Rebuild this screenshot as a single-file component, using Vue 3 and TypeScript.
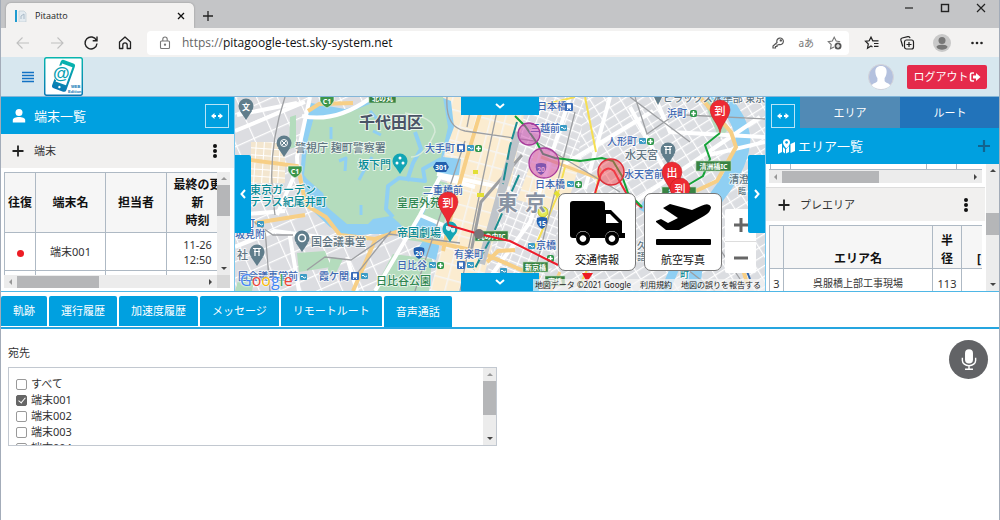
<script setup lang="ts">
import { ref } from 'vue'

interface MapLabel { t: string; x: number; y: number; s: number; k: string }
interface Pin { x: number; y: number; t: string }
interface Recipient { id: string; name: string; on: boolean }

const tabs = ['軌跡', '運行履歴', '加速度履歴', 'メッセージ', 'リモートルート', '音声通話']
const activeTab = ref('音声通話')
const areaTab = ref('エリア')

const recipients = ref<Recipient[]>([
  { id: 'all', name: 'すべて', on: false },
  { id: 't1', name: '端末001', on: true },
  { id: 't2', name: '端末002', on: false },
  { id: 't3', name: '端末003', on: false },
  { id: 't4', name: '端末004', on: false },
])

const labels: MapLabel[] = [
  { t: '千代田区', x: 124, y: 25, s: 16, k: 'ward' },
  { t: '警視庁 麹町警察署', x: 60, y: 50, s: 11, k: 'poi' },
  { t: '坂下門', x: 123, y: 67, s: 11, k: 'teal' },
  { t: '東京ガーデン', x: 15, y: 92, s: 11, k: 'teal' },
  { t: 'テラス紀尾井町', x: 15, y: 104, s: 11, k: 'teal' },
  { t: '国会議事堂', x: 76, y: 144, s: 11, k: 'poi' },
  { t: '社', x: 2, y: 157, s: 11, k: 'poi' },
  { t: '町', x: 10, y: 126, s: 10, k: 'rail' },
  { t: '坂見附', x: 0, y: 137, s: 10, k: 'rail' },
  { t: '国会議事堂前', x: 3, y: 179, s: 10, k: 'rail' },
  { t: '霞ケ関', x: 84, y: 179, s: 10, k: 'rail' },
  { t: '日比谷公園', x: 141, y: 183, s: 11, k: 'park' },
  { t: '日比谷', x: 162, y: 168, s: 10, k: 'rail' },
  { t: '皇居外苑', x: 162, y: 105, s: 11, k: 'park' },
  { t: '帝国劇場', x: 162, y: 135, s: 11, k: 'teal' },
  { t: '二重橋前', x: 188, y: 93, s: 10, k: 'rail' },
  { t: '大手町', x: 190, y: 51, s: 10, k: 'rail' },
  { t: '有楽町', x: 219, y: 157, s: 10, k: 'rail' },
  { t: '東', x: 262, y: 105, s: 21, k: 'city' },
  { t: '京', x: 290, y: 105, s: 21, k: 'city' },
  { t: '日本橋', x: 302, y: 9, s: 10, k: 'rail' },
  { t: '三越前', x: 295, y: 31, s: 10, k: 'rail' },
  { t: '日本橋', x: 300, y: 87, s: 10, k: 'rail' },
  { t: '京橋', x: 301, y: 148, s: 10, k: 'rail' },
  { t: '人形町', x: 372, y: 44, s: 10, k: 'rail' },
  { t: '浜町', x: 432, y: 16, s: 10, k: 'rail' },
  { t: '水天宮', x: 390, y: 57, s: 11, k: 'poi' },
  { t: '水天宮前', x: 389, y: 77, s: 10, k: 'rail' },
  { t: '清澄', x: 494, y: 82, s: 10, k: 'poi' },
  { t: '臨', x: 503, y: 93, s: 8, k: 'poi' },
  { t: 'サピラックス水準部 東京', x: 418, y: 1, s: 10, k: 'poi' },
  { t: '久', x: 402, y: 148, s: 9, k: 'poi' },
  { t: '語', x: 402, y: 159, s: 9, k: 'poi' },
  { t: '町', x: 445, y: 177, s: 9, k: 'teal' },
]

const metro: number[][] = [
  [22, 124], [65, 177], [126, 176], [194, 165], [232, 48], [232, 165], [325, 28],
  [332, 84], [293, 146], [404, 41], [265, 171],
]
const exits: number[][] = [[240, 48], [202, 165], [340, 84], [412, 41], [455, 13], [312, 158]]
const trains: number[][] = [[116, 175], [222, 47], [222, 164], [330, 6]]
const finishPins: Pin[] = [
  { x: 213, y: 106, t: '到' }, { x: 485, y: 14, t: '到' }, { x: 437, y: 76, t: '出' }, { x: 445, y: 92, t: '到' },
]
const greyPins: number[][] = [[11, 9], [49, 46], [67, 141], [22, 155], [433, 53]]
const routeNumbers = [
  { x: 206, y: 70, t: '301' }, { x: 306, y: 72, t: '20' }, { x: 307, y: 126, t: '15' }, { x: 184, y: 156, t: '20' },
]
const signs = [
  { x: 134, y: -4, w: 27, t: '北の丸' }, { x: 240, y: 134, w: 33, t: '丸の内IC' },
  { x: 288, y: 165, w: 25, t: '新京橋' }, { x: 310, y: 179, w: 20, t: '京橋' },
  { x: 461, y: 64, w: 35, t: '清洲橋IC' }, { x: 427, y: 90, w: 34, t: '箱崎町' },
]
</script>

<template>
  <div class="window">
    <div class="titlebar">
      <div class="browser-tab">
        <svg class="fav" viewBox="0 0 12 12"><rect x="0" y="0" width="2" height="12" fill="#1f9bd0" /><path d="M4 1h5l2 2v9H4z" fill="#e4ebf0" stroke="#b8c6d0" stroke-width=".6" /><path d="M6 9V6l3-2v5" fill="none" stroke="#a9bac8" /></svg>
        <span class="tab-title">Pitaatto</span>
        <button class="plain" aria-label="タブを閉じる"><svg viewBox="0 0 8 8" width="8" height="8"><path d="M1 1l6 6M7 1L1 7" stroke="#111" stroke-width="1.3" /></svg></button>
      </div>
      <button class="plain new-tab" aria-label="新しいタブ"><svg viewBox="0 0 12 12" width="12" height="12"><path d="M6 1v10M1 6h10" stroke="#222" stroke-width="1.3" /></svg></button>
      <div class="win-controls">
        <button class="plain" aria-label="最小化"><svg viewBox="0 0 10 10" width="10" height="10"><path d="M1 5h8" stroke="#222" stroke-width="1.2" /></svg></button>
        <button class="plain" aria-label="最大化"><svg viewBox="0 0 10 10" width="10" height="10"><rect x="1.5" y="1.5" width="7" height="7" fill="none" stroke="#222" stroke-width="1.4" /></svg></button>
        <button class="plain" aria-label="閉じる"><svg viewBox="0 0 10 10" width="10" height="10"><path d="M1 1l8 8M9 1L1 9" stroke="#222" stroke-width="1.2" /></svg></button>
      </div>
    </div>

    <div class="toolbar">
      <div class="nav">
        <button class="plain" aria-label="戻る"><svg viewBox="0 0 16 16" width="16" height="16" fill="none" stroke="#c0c0c0" stroke-width="1.1"><path d="M14 8H2M7.500 2.500L2 8l5.500 5.500" /></svg></button>
        <button class="plain" aria-label="進む"><svg viewBox="0 0 16 16" width="16" height="16" fill="none" stroke="#c0c0c0" stroke-width="1.1"><path d="M2 8h12M8.500 2.500L14 8l-5.500 5.500" /></svg></button>
        <button class="plain" aria-label="更新"><svg viewBox="0 0 16 16" width="16" height="16" fill="none" stroke="#222" stroke-width="1.4"><path d="M13.500 5.500A6 6 0 1 0 14 8.500M14 1.500v4.300H9.700" /></svg></button>
        <button class="plain" aria-label="ホーム"><svg viewBox="0 0 16 16" width="16" height="16" fill="none" stroke="#222" stroke-width="1.3" stroke-linejoin="round"><path d="M2.500 7L8 2l5.500 5v6.500h-3.300V10a2.200 2.200 0 0 0-4.400 0v3.500H2.500z" /></svg></button>
      </div>
      <div class="address">
        <svg viewBox="0 0 12 14" width="12" height="14" fill="none" stroke="#777" stroke-width="1.1"><rect x="1.500" y="5" width="9" height="7.500" rx="1" /><path d="M3.800 5V3.200a2.200 2.200 0 0 1 4.400 0V5" /><circle cx="6" cy="8.700" r=".6" fill="#555" /></svg>
        <span class="url"><span class="scheme">https://</span>pitagoogle-test.sky-system.net</span>
        <svg viewBox="0 0 14 14" width="14" height="14" fill="none" stroke="#555" stroke-width="1.2"><path d="M6 6.500a3.300 3.300 0 1 1 2.200 2L7 9H6v1.500H4.500V12H2v-2z" /><circle cx="9.800" cy="4.400" r=".6" fill="#555" /></svg>
        <span class="translate">aあ</span>
        <svg viewBox="0 0 16 16" width="16" height="16" fill="none" stroke="#777" stroke-width="1.1"><path d="M7 12L3.500 13.800l.7-4.300L1.300 6.700l4-.6L7.200 2.200l2 3.900 4 .6" /><circle cx="11" cy="11" r="3.500" fill="#555" stroke="none" /><path d="M11 9v4M9 11h4" stroke="#fff" /></svg>
      </div>
      <div class="tools">
        <button class="plain" aria-label="お気に入り"><svg viewBox="0 0 16 16" width="16" height="16" fill="none" stroke="#222" stroke-width="1.2"><path d="M8.500 12L7 11l-3.500 2.300.8-4.300L1.500 6.300l3.700-.5L7 2.200l1.800 3.600h5.700M10 8.500h4.500M10 11.300h4.500" /></svg></button>
        <button class="plain" aria-label="コレクション"><svg viewBox="0 0 16 16" width="16" height="16" fill="none" stroke="#222" stroke-width="1.2"><rect x="5.500" y="5" width="9" height="9" rx="2" /><path d="M10 7v5M7.500 9.500h5M3.800 11.500L2 5.500C1.600 4 2 3.300 3.200 3l5.600-1.400c1.200-.2 2 .4 2.300 1.600" /></svg></button>
        <button class="plain" aria-label="プロフィール"><svg viewBox="0 0 18 18" width="18" height="18"><circle cx="9" cy="9" r="9" fill="#c9c9c9" /><circle cx="9" cy="6.500" r="3.500" fill="#777" /><path d="M3.500 13c0-3 11-3 11 0-1.500 3.500-9.500 3.500-11 0z" fill="#777" /></svg></button>
        <button class="plain" aria-label="その他"><svg viewBox="0 0 16 16" width="16" height="16" fill="#222"><circle cx="3.500" cy="8" r="1.300" /><circle cx="8" cy="8" r="1.300" /><circle cx="12.500" cy="8" r="1.300" /></svg></button>
      </div>
    </div>

    <header class="app-header">
      <button class="plain menu" aria-label="メニュー"><svg viewBox="0 0 12 12" width="12" height="12"><path d="M0 1.500h12M0 4.500h12M0 7.500h12M0 10.500h12" stroke="#1272c4" stroke-width="1.5" /></svg></button>
      <svg class="logo" viewBox="0 0 39 39" width="39" height="39">
        <defs><linearGradient id="lg" x1="0" y1="0" x2="0" y2="1"><stop offset="0" stop-color="#08b5ae" /><stop offset="1" stop-color="#0878b4" /></linearGradient></defs>
        <rect x=".7" y=".7" width="37.600" height="37.600" rx="2" fill="#fff" stroke="url(#lg)" stroke-width="1.5" />
        <g transform="rotate(20 20 19)"><rect x="12" y="4" width="15" height="30" rx="2.500" fill="url(#lg)" /><rect x="14" y="8" width="11" height="19" fill="#fff" /><circle cx="19.500" cy="31" r="1.200" fill="#fff" /></g>
        <circle cx="16.500" cy="16.500" r="8" fill="#fff" />
        <text x="9" y="22" class="logo-at">@</text>
        <rect x="26" y="25" width="11" height="12" fill="#fff" />
        <text x="27" y="31" class="logo-s">WEB</text><text x="24" y="36" class="logo-s">Edition</text>
      </svg>
      <div class="spacer"></div>
      <svg class="avatar" viewBox="0 0 26 26" width="26" height="26"><circle cx="13" cy="13" r="12.500" fill="#b4c1de" stroke="#d4d4da" /><path d="M13 2c4 0 6 2.600 5.600 6.500-.3 3-1.300 4.500-2 5.500v3c.5 1.700 4 2 5.700 4.200A12 12 0 0 1 13 25a12 12 0 0 1-9.300-3.800C5.400 19 9 18.700 9.400 17v-3c-.7-1-1.700-2.500-2-5.500C7 4.600 9 2 13 2z" fill="#fff" /></svg>
      <button class="logout">ログアウト<svg viewBox="0 0 12 12" width="12" height="12"><path d="M5 2H3a1.500 1.500 0 0 0-1.500 1.500v5A1.500 1.500 0 0 0 3 10h2" fill="none" stroke="#fff" stroke-width="1.6" /><path d="M4 4.500h3V2l4.500 4L7 10V7.500H4z" fill="#fff" /></svg></button>
    </header>

    <main class="workspace">
      <section class="panel left">
        <div class="panel-head">
          <svg viewBox="0 0 14 14" width="14" height="14" fill="#fff"><circle cx="7" cy="3.500" r="3.500" /><path d="M.8 13.500V11c0-4 12.400-4 12.400 0v2.500z" /></svg>
          <h2>端末一覧</h2>
          <button class="resize" aria-label="幅を変更"><svg viewBox="0 0 14 8" width="14" height="8"><path d="M4.500 1L1 4l3.500 3V5H6V3H4.500zM9.500 1L13 4 9.500 7V5H8V3h1.500z" fill="#fff" /></svg></button>
        </div>
        <div class="group-bar">
          <button class="plain" aria-label="開く"><svg viewBox="0 0 12 12" width="12" height="12"><path d="M6 .5v11M.5 6h11" stroke="#222" stroke-width="1.8" /></svg></button>
          <span>端末</span>
          <button class="plain dots" aria-label="端末メニュー"><i></i><i></i><i></i></button>
        </div>
        <div class="pane">
          <div class="clip">
            <table class="grid devices">
              <colgroup><col class="c31"><col class="c70"><col class="c61"><col class="c62"></colgroup>
              <thead><tr><th>往復</th><th>端末名</th><th>担当者</th><th>最終の更<br>新<br>時刻</th></tr></thead>
              <tbody>
                <tr><td><span class="live"></span></td><td>端末001</td><td></td><td>11-26<br>12:50</td></tr>
                <tr><td></td><td></td><td></td><td></td></tr>
              </tbody>
            </table>
          </div>
          <div class="vbar"><i class="up off"></i><div class="track"><div class="thumb t31"></div></div><i class="down"></i></div>
          <div class="hbar"><i class="lt off"></i><div class="track"><div class="thumb w82"></div></div><i class="rt"></i></div>
        </div>
      </section>

      <section class="map" aria-label="地図">
        <svg class="canvas" viewBox="0 0 530 194" preserveAspectRatio="xMidYMid slice">
          <defs>
            <pattern id="pA" width="19" height="15" patternUnits="userSpaceOnUse" patternTransform="rotate(-24)"><rect width="19" height="15" fill="#dcdde1" /><path d="M0 0H19M0 0V15" stroke="#fff" stroke-width="2.4" /></pattern>
            <pattern id="pB" width="13" height="9" patternUnits="userSpaceOnUse" patternTransform="rotate(-32)"><rect width="13" height="9" fill="#dbdde1" /><path d="M0 0H13M0 0V9" stroke="#fff" stroke-width="2.4" /></pattern>
            <pattern id="pC" width="14" height="15" patternUnits="userSpaceOnUse" patternTransform="rotate(15)"><rect width="14" height="15" fill="#fbecd0" /><path d="M0 0H14M0 0V15" stroke="#f6f5f2" stroke-width="3" /></pattern>
            <pattern id="pD" width="9" height="8" patternUnits="userSpaceOnUse" patternTransform="rotate(22)"><rect width="9" height="8" fill="#dcdde1" /><path d="M0 0H9M0 0V8" stroke="#fff" stroke-width="2.4" /></pattern>
            <pattern id="pE" width="8" height="7" patternUnits="userSpaceOnUse" patternTransform="rotate(4)"><rect width="8" height="7" fill="#f3e6cf" /><path d="M0 0H8M0 0V7" stroke="#fff" stroke-width="2" /></pattern>
          </defs>
          <rect width="530" height="194" fill="url(#pA)" />
          <path d="M16 45H50V86H16z" fill="url(#pE)" />
          <path d="M205 0H300L285 60 262 130 245 194H195L215 120z" fill="url(#pC)" />
          <path d="M292 0H365L335 90 305 194H246L270 120z" fill="url(#pD)" />
          <path d="M350 0H530V194H310L340 90z" fill="url(#pB)" />
          <path d="M302 50L345 66 330 115 282 103z" fill="url(#pC)" />
          <path d="M76 6L110 12 150 0H206L216 4 219 30 208 60 226 62 224 78 206 79 199 110 204 150 201 163 180 156 196 132 168 137 135 137 112 140 95 130 80 116 70 96 66 70 68 36 72 18z" fill="#8fcff3" />
          <g fill="#b4dcbd">
            <path d="M79 20L110 17 152 0H208L213 30 206 61 203 79 186 120 172 134 163 125 156 119 138 122 133 127 112 127 92 110 88 96 72 82 69 78 73 42z" />
            <path d="M205 84l13 4-9 38-22-6z" /><path d="M180 132l24 5-3 10-28-4z" />
            <path d="M158 157L197 162 194 194H138z" /><path d="M62 156l28-2 6 16-32 5z" /><path d="M55 20l6-2v32l-7 2z" /><path d="M468 2h16l8 32-8 8z" />
            <path d="M96 160l12 2-8 16-8-2z" /><path d="M5 177l15 3-3 14H0z" />
          </g>
          <g fill="none" stroke="#8fcff3" stroke-linejoin="round">
            <path d="M180 35L186 52 178 66 172 84M206 62L188 72 190 84 164 81 153 89 151 112 158 120" stroke-width="4" />
            <path d="M104 64l7-3-1 13M124 83l8-15 5-8M135 14l8 9M138 34l8 4M126 108v10M96 30v12" stroke-width="3" />
            <path d="M480-5Q504 17 508 40 508 66 483 98 462 125 458 194" stroke-width="15" />
            <path d="M406 108l14 8M430 194l12-28" stroke-width="9" />
          </g>
          <path d="M170 16Q200 20 200 35 190 60 176 60" fill="none" stroke="#d6ead9" stroke-width="1.5" />
          <g fill="none" stroke="#fff" stroke-width="4">
            <path d="M75 0L62 60 63 76M0 34L70 5M2 18l60-12M67 19Q100 26 134 2M0 118L50 114M0 150L40 134 100 142M54 134L64 194M62 72L42 118M185 118L208 128M202 77L275 92M206 78L185 118 140 194M112 160L122 194M205 80L240 90M335 0L295 125 245 194M375 0L350 92M325 70L418 14M392 110L525 20M395 10L450 110M500 130L530 110M474 58L530 45M420 0L435 35 530 40" />
          </g>
          <g fill="none" stroke="#f7cf86" stroke-width="4">
            <path d="M73 14L84 7 118 6M15 63L62 69 65 80 71 108 91 120 105 138 140 142 164 134 195 144 245 155 305 181M20 126L70 118M141 141L118 194M208 154L218 110 232 60 250 0M252 165L263 154 280 153M463-2L496 35 501 50 482 84 461 94M495 137L503 156 512 186" />
            <path d="M306 60L365 82M325 175L316 194" stroke-width="3" />
          </g>
          <g fill="none" stroke="#f5df54" stroke-width="2"><path d="M350 0L361 55M384 105L344 190M365 71L356 125M300 150L322 100 330 70M308 8L340 0" /></g>
          <g fill="none" stroke="#9d9fa2" stroke-width="1.3">
            <path d="M50 0Q30 60 40 118M0 112L38 138 58 138M30 132L35 194M72 173L90 160 116 163 154 137 225 146M156 134L120 179M212 0Q210 30 230 34L300 44 385 95M230 44L180 194M232 30L238 0M265 0L246 90 225 194M400 0L412 37 448 12M340 15L325 75 295 194M450 18L530 22M455 45L395 0M480 194L430 155M470 130l35 52" />
            <path d="M287 58L246 105 236 155" stroke-width="3" />
          </g>
          <path d="M283 35l-22 78-15 54M276 65l-17 55" fill="none" stroke="#bfc4ca" stroke-width="8" />
          <path d="M284 78L258 137 239 173M282 25l-7 24-7 38" fill="none" stroke="#1b8d92" stroke-width="2" stroke-dasharray="18 3" />
          <path d="M495 132l20 50" fill="none" stroke="#2d62aa" stroke-width="2" />
          <circle cx="308" cy="115" r="5" fill="#e3e957" stroke="#c2c22c" /><path d="M242 98h7M238 75h5M320 95l4 4" stroke="#e2df34" stroke-width="4" />
          <path d="M360 96L366 77Q372 68 379 74 387 89 393 99L407 111" fill="none" stroke="#ee2937" stroke-width="2" />
          <path d="M280 19L290 29 302 46 308 57 320 61 345 64 367 61 378 64 387 79 393 96 407 110M485 36L470 48 475 62 468 79 448 91" fill="none" stroke="#16a33a" stroke-width="2" />

          <g v-for="s in signs" :key="s.t + s.x"><rect :x="s.x" :y="s.y" :width="s.w" height="10" fill="#398343" stroke="#b9dcb9" stroke-width=".6" /><text :x="s.x + s.w / 2" :y="s.y + 5" class="sign">{{ s.t }}</text></g>
          <g v-for="c in [[92, 4], [60, 74]]" :key="c[0]" :transform="`translate(${c[0]} ${c[1]})`"><path d="M-7-5H7V0Q5 5 0 7-5 5-7 0z" fill="#3d964a" stroke="#fff" stroke-width=".6" /><text y="0" class="num">C1</text></g>
          <g v-for="r in routeNumbers" :key="r.x + r.y" :transform="`translate(${r.x} ${r.y})`"><path v-if="r.t === '301'" d="M-5-5H5L8 0 5 5H-5L-8 0z" fill="#235fae" /><path v-else d="M-5-5Q0-7 5-5 7 2 0 6-7 2-5-5z" fill="#235fae" /><text class="num">{{ r.t }}</text></g>

          <text v-for="(l, i) in labels" :key="i" :x="l.x" :y="l.y" :font-size="l.s" :class="['lab', l.k]">{{ l.t }}</text>
          <g v-for="(m, i) in metro" :key="'m' + i" :transform="`translate(${m[0]} ${m[1]})`"><rect width="7" height="6" rx="1" fill="#3c9cc5" /><path d="M1 3q1-2 2 0t3 0" fill="none" stroke="#fff" /></g>
          <g v-for="(m, i) in exits" :key="'e' + i" :transform="`translate(${m[0]} ${m[1]})`"><rect width="7" height="7" rx="2" fill="#2e964a" /><path d="M3.500 1v5M1.200 3.500h4.600" stroke="#fff" stroke-width="1.5" /></g>
          <g v-for="(m, i) in trains" :key="'t' + i" :transform="`translate(${m[0]} ${m[1]})`"><rect width="8" height="8" rx="1" fill="#3a6dba" /><rect x="2" y="1.500" width="4" height="4" fill="#fff" /><path d="M2 7l1-1M6 7L5 6" stroke="#fff" /></g>

          <g v-for="(p, i) in greyPins" :key="'g' + i" :transform="`translate(${p[0]} ${p[1]})`">
            <path d="M-6 5L0 14 6 5z" fill="#607d8b" /><circle r="7.500" fill="#607d8b" />
            <text v-if="i === 0" class="pin-s">文</text><g v-else-if="i === 1" fill="none" stroke="#fff"><circle r="3.500" /><path d="M-2-2l4 4M2-2l-4 4" /></g><circle v-else-if="i === 2" r="3.500" fill="none" stroke="#fff" stroke-width="1.5" /><path v-else d="M-4-3.500H4M-3-.5H3M-2-3.500V4M2-3.500V4" stroke="#fff" stroke-width="1.2" />
          </g>
          <path d="M418-2h10l-5 10z" fill="#607d8b" />
          <g transform="translate(165 64)"><path d="M-6 4L0 13 6 4z" fill="#12a5b5" /><circle r="7.500" fill="#12a5b5" /><g fill="#fff"><circle cy="-3" r="1.500" /><circle cx="-3" cy="2" r="1.500" /><circle cx="3" cy="2" r="1.500" /></g></g>
          <g transform="translate(215 132)"><path d="M-6 4L0 13 6 4z" fill="#12a5b5" /><circle r="7.500" fill="#12a5b5" /><path d="M-4-3H1V0Q-1 4-4 0zM1-1h4V2Q3 5 1 2z" fill="#d9f2f4" /></g>

          <path d="M213 128L244 137 275 144 323 168" fill="none" stroke="#ed1c2b" stroke-width="2" />
          <circle cx="244" cy="137" r="5" fill="#77757a" />
          <g fill="#ce4cb1" fill-opacity=".55" stroke="#a83a9a" stroke-width="1.3"><circle cx="294" cy="37" r="11" /><circle cx="309" cy="66" r="15" /></g>
          <circle cx="376" cy="75" r="13" fill="#f34b54" fill-opacity=".5" stroke="#e0303a" stroke-width="1.5" />
          <path d="M347 176h11l-6 9z" fill="#ed1c24" />
          <g v-for="(p, i) in finishPins" :key="'p' + i" :transform="`translate(${p.x} ${p.y})`"><path d="M-10-1A10 10 0 0 1 10-1C9 8 2 12 0 22-2 12-9 8-10-1z" fill="#ed2a32" stroke="#b61a20" stroke-width=".5" /><text y="-1" class="pin-t">{{ p.t }}</text></g>
        </svg>

        <button class="edge top" aria-label="上"><svg viewBox="0 0 10 6" width="10" height="6"><path d="M1 1l4 3.500L9 1" /></svg></button>
        <button class="edge bottom" aria-label="下"><svg viewBox="0 0 10 6" width="10" height="6"><path d="M1 1l4 3.500L9 1" /></svg></button>
        <button class="edge west" aria-label="左"><svg viewBox="0 0 6 10" width="6" height="10"><path d="M5 1L1.500 5 5 9" /></svg></button>
        <div class="zoom"><button aria-label="拡大"><svg viewBox="0 0 14 14" width="14" height="14"><path d="M7 0v14M0 7h14" /></svg></button><button aria-label="縮小"><svg viewBox="0 0 14 14" width="14" height="14"><path d="M0 7h14" /></svg></button></div>
        <button class="edge east" aria-label="右"><svg viewBox="0 0 6 10" width="6" height="10"><path d="M1 1l3.500 4L1 9" /></svg></button>
        <div class="google"><span class="gb">G</span><span class="gr">o</span><span class="gy">o</span><span class="gb">g</span><span class="gg">l</span><span class="gr">e</span></div>
        <div class="credits"><span>地図データ ©2021 Google</span><a href="#terms">利用規約</a><a href="#report">地図の誤りを報告する</a></div>
        <div class="cards">
          <button class="card"><svg viewBox="0 0 56 46" width="56" height="46"><path d="M4 0H33Q36 0 36 3V9H42L53 20V32H56V37H50A7 7 0 0 0 36 37H21A7 7 0 0 0 7 37H4Q1 37 1 34V3Q1 0 4 0zM37 13V22H50L41 13z" fill-rule="evenodd" /><path d="M14 30.500a7 7 0 1 0 .1 0zM14 34.300a3.300 3.300 0 1 1-.1 0zM43 30.500a7 7 0 1 0 .1 0zM43 34.300a3.300 3.300 0 1 1-.1 0z" fill-rule="evenodd" /></svg><span>交通情報</span></button>
          <button class="card"><svg viewBox="0 0 56 46" width="56" height="46"><path d="M1 20l5-2 7 4 10-5L8 7l7-4 22 6 9-4Q54 1 56 6 56 11 49 15L24 29H11L1 21z" /><rect x="1" y="38" width="55" height="6" rx="1" /></svg><span>航空写真</span></button>
        </div>
      </section>

      <section class="panel right">
        <div class="area-tabs">
          <button class="resize" aria-label="幅を変更"><svg viewBox="0 0 14 8" width="14" height="8"><path d="M4.500 1L1 4l3.500 3V5H6V3H4.500zM9.500 1L13 4 9.500 7V5H8V3h1.500z" fill="#fff" /></svg></button>
          <button v-for="t in ['エリア', 'ルート']" :key="t" :class="['area-tab', { on: areaTab === t }]" @click="areaTab = t">{{ t }}</button>
        </div>
        <div class="panel-head area-head">
          <svg viewBox="0 0 17 15" width="17" height="15" fill="#fff"><path d="M0 6l4-1.500V13L0 15zM5 8l2 2v4.500L5 13zM8 10.500l3-3.500v6l-3 1.500zM12.500 5L17 3v9l-4.500 2z" /><path d="M8.500 0a3.500 3.500 0 0 1 3.500 3.500C12 6 8.500 9.500 8.500 9.500S5 6 5 3.500A3.500 3.500 0 0 1 8.500 0zm0 2a1.400 1.400 0 1 0 .1 0z" fill-rule="evenodd" /></svg>
          <h2>エリア一覧</h2>
          <button class="plain add" aria-label="追加"><svg viewBox="0 0 12 12" width="12" height="12"><path d="M6 0v12M0 6h12" stroke="#12648f" stroke-width="2.2" /></svg></button>
        </div>
        <div class="area-body">
          <div class="area-list">
            <div class="tail"><i></i><i></i><i></i><i></i></div>
            <div class="hbar"><i class="lt off"></i><div class="track"><div class="thumb w97"></div></div><i class="rt"></i></div>
            <div class="group-bar pre">
              <button class="plain" aria-label="開く"><svg viewBox="0 0 12 12" width="12" height="12"><path d="M6 .5v11M.5 6h11" stroke="#222" stroke-width="1.8" /></svg></button>
              <span>プレエリア</span>
              <button class="plain dots" aria-label="プレエリアメニュー"><i></i><i></i><i></i></button>
            </div>
            <div class="clip area-clip">
              <table class="grid areas">
                <colgroup><col class="c14"><col class="c149"><col class="c29"><col class="c34"></colgroup>
                <thead><tr><th></th><th>エリア名</th><th>半<br>径</th><th>[</th></tr></thead>
                <tbody><tr><td>3</td><td>呉服橋上部工事現場</td><td>113</td><td></td></tr></tbody>
              </table>
            </div>
          </div>
          <div class="vbar wide"><i class="up"></i><div class="track"><div class="thumb t22"></div></div><i class="down"></i></div>
        </div>
      </section>
    </main>

    <nav class="tabs">
      <button v-for="t in tabs" :key="t" :class="{ active: activeTab === t }" @click="activeTab = t">{{ t }}</button>
    </nav>

    <section class="call">
      <div class="to">
        <p id="to-label">宛先</p>
        <div class="recipients" role="group" aria-labelledby="to-label">
          <div class="choices">
            <label v-for="r in recipients" :key="r.id" :for="r.id"><input :id="r.id" v-model="r.on" type="checkbox">{{ r.name }}</label>
          </div>
          <div class="vbar"><i class="up off"></i><div class="track"><div class="thumb t34"></div></div><i class="down"></i></div>
        </div>
      </div>
      <button class="mic" aria-label="通話"><svg viewBox="0 0 20 26" width="18" height="23" fill="none" stroke="#fff" stroke-width="1.6"><rect x="5.500" y="1.500" width="9" height="16" rx="4.500" fill="#fff" stroke="none" /><path d="M2.500 11v3a7.500 6 0 0 0 15 0v-3M10 20v4M5.500 24h9" /></svg></button>
    </section>
  </div>
</template>

<style>
html, body { margin: 0; background: #fff; }
</style>

<style scoped>
* { box-sizing: border-box; }
.window { position: relative; min-height: 100vh; overflow: hidden; background: #fff; color: #333; font: 11px/16px "Noto Sans", "Noto Sans CJK JP", sans-serif; }
.window::after { content: ""; position: absolute; inset: 0; border: solid #a3acb9; border-width: 0 1px; pointer-events: none; }
button { font: inherit; color: inherit; border: 0; padding: 0; cursor: pointer; }
.plain { display: flex; align-items: center; justify-content: center; background: none; }
svg { display: block; flex: none; }
h2, p { margin: 0; font-weight: 400; }

.titlebar { display: flex; height: 28px; background: #c4c5c7; padding-left: 6px; }
.browser-tab { display: flex; align-items: center; width: 188px; margin-top: 3px; padding: 0 9px; gap: 8px; background: #f3f2f1; border-radius: 5px 5px 0 0; box-shadow: 0 0 2px #888; clip-path: inset(-3px -3px 0 -3px); }
.fav { width: 12px; height: 12px; }
.tab-title { flex: 1; font-family: "Open Sans", sans-serif; font-size: 9px; color: #222; }
.new-tab { margin: 3px 0 0 8px; }
.win-controls { display: flex; gap: 26px; margin-left: auto; padding: 3px 14px 0 0; align-items: flex-start; }
.toolbar { display: flex; align-items: center; gap: 14px; height: 29px; padding: 0 14px 0 15px; background: #f3f2f1; }
.nav { display: flex; gap: 18px; }
.tools { display: flex; gap: 17px; }
.tools button { width: 18px; }
.address { flex: 1; display: flex; align-items: center; height: 24px; padding: 0 6px 0 12px; background: #fff; border-radius: 4px; gap: 13px; }
.url { flex: 1; margin-left: -2px; font-family: "Open Sans", sans-serif; font-size: 12px; color: #111; }
.scheme { color: #666; }
.translate { font-size: 10px; color: #777; }

.app-header { display: flex; align-items: center; height: 40px; padding: 0 13px 0 22px; background: #d7e7ef; border-bottom: 1px solid #83b5d8; }
.menu { margin-right: 10px; }
.logo-at { font: bold 17px "Liberation Sans", sans-serif; fill: #0a9fb3; }
.logo-s { font: bold 4px "Liberation Sans", sans-serif; fill: #0878b4; }
.spacer { flex: 1; }
.logout { display: flex; align-items: center; justify-content: center; width: 80px; height: 24px; margin-left: 13px; border-radius: 2px; background: #e52a4b; color: #fff; }

.workspace { display: grid; grid-template-columns: 23.5% minmax(0, 1fr) 23.5%; border-bottom: 1px solid #4fb7e6; }
.panel { min-width: 0; background: #fff; }
.left { border-right: 1px solid #7cc7ec; }
.right { border-left: 1px solid #7cc7ec; }
.panel-head { display: flex; align-items: center; height: 37px; padding: 0 5px 0 12px; gap: 8px; background: #00a0e0; color: #fff; }
.panel-head h2 { flex: 1; font-size: 13px; line-height: 18px; }
.resize { display: flex; align-items: center; justify-content: center; width: 24px; height: 24px; background: none; border: 1px solid #b8e4f7; }
.group-bar { display: flex; align-items: center; height: 34px; padding: 0 15px 0 12px; gap: 10px; background: #f1f0ef; }
.group-bar span { flex: 1; }
.dots { flex-direction: column; gap: 1px; width: 8px; }
.dots i { width: 4px; height: 4px; border-radius: 50%; background: #111; }
.pane { display: grid; grid-template-columns: minmax(0, 1fr) 13px; grid-template-rows: 103px 13px; margin: 4px 4px 2px 4px; background: #d8d8d8; }
.clip { overflow: hidden; background: #fff; }
.grid { border-collapse: collapse; table-layout: fixed; font-size: 11px; line-height: 15px; }
.grid th, .grid td { border: 1px solid #aeb9c4; padding: 0; text-align: center; color: #333; }
.grid th { font-size: 12px; line-height: 18px; color: #111; background: #f6f6f6; font-weight: 700; }
.devices { width: 224px; }
.devices th { height: 60px; }
.devices td { height: 38px; }
.c31 { width: 31px; } .c70 { width: 70px; } .c61 { width: 61px; } .c62 { width: 62px; }
.c14 { width: 14px; } .c149 { width: 149px; } .c29 { width: 29px; } .c34 { width: 34px; }
.live { display: inline-block; width: 7px; height: 7px; border-radius: 50%; background: #ed1c24; vertical-align: middle; }

.vbar, .hbar { display: flex; align-items: center; background: #ececec; }
.vbar { flex-direction: column; width: 13px; }
.hbar { height: 13px; }
.vbar > i, .hbar > i { flex: none; width: 13px; height: 13px; display: flex; align-items: center; justify-content: center; }
.vbar > i::before, .hbar > i::before { content: ""; border: 3px solid transparent; }
.up::before { border-bottom-color: #444 !important; border-top-width: 0 !important; }
.down::before { border-top-color: #444 !important; border-bottom-width: 0 !important; }
.lt::before { border-right-color: #444 !important; border-left-width: 0 !important; }
.rt::before { border-left-color: #444 !important; border-right-width: 0 !important; }
.off { opacity: .5; }
.track { flex: 1; width: 100%; }
.thumb { background: #b5b6b8; }
.hbar .thumb { height: 12px; }
.t31 { height: 31px; } .t34 { height: 34px; } .t22 { height: 22px; margin-top: 36px; }
.w82 { width: 82px; } .w97 { width: 97px; }

.map { position: relative; min-width: 0; overflow: hidden; }
.canvas { position: absolute; width: 100%; height: 100%; font-family: "Noto Sans", "Noto Sans CJK JP", sans-serif; }
.lab { dominant-baseline: central; paint-order: stroke; stroke: #fff; stroke-opacity: .7; stroke-width: 2px; stroke-linejoin: round; font-weight: 500; }
.ward { fill: #4a5366; font-weight: 700; }
.city { fill: #8993a3; font-weight: 700; }
.poi { fill: #607582; }
.teal { fill: #078a95; }
.park { fill: #2f8650; }
.rail { fill: #3e68b3; }
.num, .sign, .pin-s, .pin-t { fill: #fff; text-anchor: middle; dominant-baseline: central; font-size: 7px; font-weight: 700; }
.pin-s { font-size: 8px; }
.pin-t { font-size: 11px; font-weight: 500; }
.edge { position: absolute; display: flex; align-items: center; justify-content: center; background: #00a0e0; }
.edge path { fill: none; stroke: #fff; stroke-width: 2; }
.top, .bottom { left: 50%; width: 78px; height: 18px; margin-left: -39px; }
.top { top: 0; }
.bottom { bottom: 0; }
.west, .east { top: 58px; width: 16px; height: 78px; }
.west { left: 0; border-radius: 0 2px 2px 0; }
.east { right: 0; width: 17px; border-radius: 2px 0 0 2px; }
.zoom { position: absolute; right: 9px; top: 112px; width: 31px; background: #fff; border-radius: 2px; }
.zoom button { display: flex; align-items: center; justify-content: center; width: 100%; height: 32px; background: none; }
.zoom button + button { border-top: 1px solid #ddd; }
.zoom path { stroke: #666; stroke-width: 3; }
.google { position: absolute; left: 5px; bottom: 1px; display: flex; font: 500 16px/20px "Open Sans", sans-serif; text-shadow: 0 0 2px #fff, 0 0 2px #fff; }
.gb { color: #4285f4; } .gr { color: #ea4335; } .gy { color: #fbbc05; } .gg { color: #34a853; }
.credits { position: absolute; right: 0; bottom: 0; display: flex; gap: 9px; padding: 0 4px 0 2px; font-size: 8px; line-height: 12px; color: #222; background: rgba(245, 245, 245, .7); white-space: nowrap; }
.credits a { color: inherit; text-decoration: none; }
.cards { position: absolute; right: 43px; top: 96px; display: flex; gap: 8px; }
.card { display: flex; flex-direction: column; align-items: center; gap: 5px; width: 78px; padding: 7px 0 2px; background: #fff; border: 1px solid #777; border-radius: 7px; color: #111; }

.area-tabs { display: flex; align-items: center; height: 31px; padding-left: 5px; background: #00a0e0; color: #fff; }
.area-tabs .resize { margin: 7px 5px 0 0; flex: none; }
.area-tab { flex: 1; height: 31px; background: #2273ba; }
.area-tab.on { background: #518ab5; }
.area-head { height: 36px; padding: 0 10px 0 12px; gap: 3px; }
.area-body { display: flex; height: 127px; overflow: hidden; }
.area-list { flex: 1; min-width: 0; display: flex; flex-direction: column; padding-right: 1px; }
.area-list > .hbar, .tail, .area-clip { margin: 0 3px; }
.area-list > .hbar { flex: none; }
.tail { display: flex; height: 6px; flex: none; border-bottom: 1px solid #aeb9c4; padding-left: 1px; }
.tail i { border-left: 1px solid #aeb9c4; width: 20px; }
.tail i:nth-child(2) { flex: 1; } .tail i:nth-child(3) { width: 30px; } .tail i:nth-child(4) { width: 26px; }
.pre { flex: none; margin: 4px 0; border-top: 1px solid #ddd; }
.wide { width: 13px; margin-right: 1px; }
.areas { width: 226px; }
.areas th { height: 43px; vertical-align: bottom; }
.areas td { height: 29px; font-size: 10px; }
.areas td:nth-child(odd) { font-size: 11px; }
.areas th:last-child { text-align: right; padding-right: 14px; }

.tabs { display: flex; align-items: flex-start; gap: 2px; padding: 4px 0 0 1px; border-bottom: 2px solid #25a5df; }
.tabs button { height: 30px; margin-bottom: 1px; padding: 0 12px; background: #00a0e0; color: #fff; border-radius: 2px 2px 0 0; }
.tabs .active { height: 31px; margin-bottom: 0; }

.call { display: flex; align-items: flex-start; padding: 11px 12px 0 8px; }
.to { flex: 1; padding-top: 5px; }
.recipients { display: flex; width: 52%; height: 79px; margin-top: 6px; border: 1px solid #c2c8d0; }
.choices { flex: 1; padding: 8px 7px 0; overflow: hidden; }
.choices label { display: flex; align-items: center; gap: 4px; height: 16px; }
.choices input { appearance: none; width: 11px; height: 11px; margin: 0; border: 1px solid #999; border-radius: 2px; background: #fff; }
.choices input:checked { background: #666; border-color: #666; }
.choices input:checked::after { content: ""; display: block; width: 3px; height: 6px; margin: 0 3px; border: solid #fff; border-width: 0 1px 1px 0; transform: rotate(40deg); }
.mic { display: flex; align-items: center; justify-content: center; width: 39px; height: 39px; border-radius: 50%; background: #626366; }
</style>
